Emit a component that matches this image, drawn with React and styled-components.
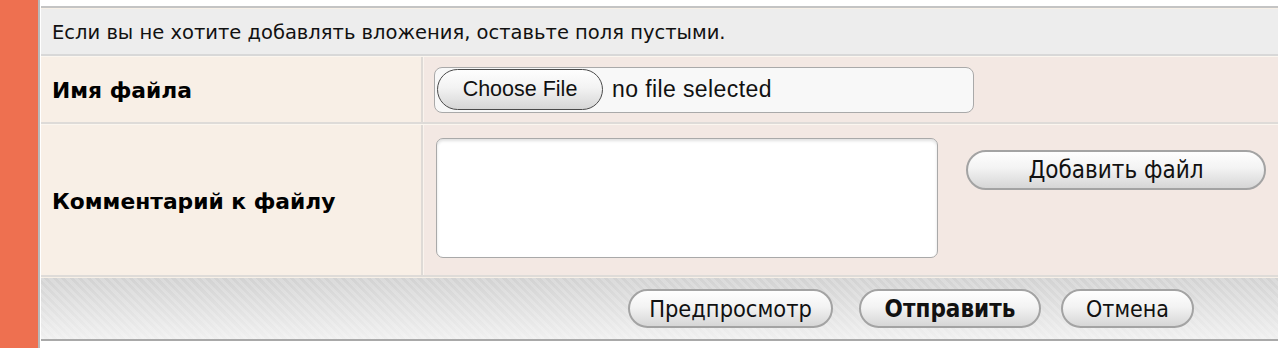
import React from "react";
import styled, { createGlobalStyle } from "styled-components";

const GlobalStyle = createGlobalStyle`
  html, body { margin: 0; padding: 0; background: #ffffff; }
  body { font-family: "DejaVu Sans", Verdana, sans-serif; color: #000; }
  #root { height: 348px; overflow: hidden; }
`;

const Page = styled.div`
  display: flex;
  height: 348px;
  width: 1278px;
  overflow: hidden;
`;

const Sidebar = styled.div`
  flex: 0 0 38px;
  background: #ee7050;
`;

const Main = styled.div`
  flex: 1;
  border-left: 2px solid #b9b9b9;
  padding: 6px 0 0 1px;
  background: #fff;
  min-width: 0;
`;

const Panel = styled.div`
  border-top: 2px solid #c4c4c4;
  border-bottom: 2px solid #a9a9a9;
  width: 1300px;
`;

const InfoRow = styled.div`
  border-top: 1px solid #f7f0e7;
  border-bottom: 2px solid #d8d8d8;
  height: 43px;
  background: #ededed;
  display: flex;
  align-items: center;
  padding: 2px 0 0 11px;
  font-size: 19.5px;
  color: #111;
`;

const FieldRow = styled.div`
  display: grid;
  grid-template-columns: 382px 1fr;
  border-top: 1px solid #fbf6ef;
  border-bottom: 2px solid #dedbd8;
  height: ${(p) => p.$height}px;
`;

const LabelCell = styled.div`
  background: #f8efe6;
  border-right: 2px solid #dedad6;
  display: flex;
  align-items: center;
  padding: 2px 0 0 11px;
  font-weight: bold;
  font-size: 21.8px;
`;

const InputCell = styled.div`
  background: #f3e8e3;
  border-left: 1px solid #faf4ee;
  display: flex;
  align-items: ${(p) => (p.$top ? "flex-start" : "center")};
  padding: ${(p) => p.$pad};
  gap: ${(p) => p.$gap || 0}px;
`;

const FileBox = styled.div`
  width: 536px;
  height: 44px;
  border: 1px solid #a9a9a9;
  border-radius: 8px;
  background: #f8f8f8;
  display: flex;
  align-items: center;
  padding-left: 2px;
  gap: 9px;
`;

const PillButton = styled.button`
  box-sizing: border-box;
  width: ${(p) => p.$w}px;
  height: ${(p) => p.$h || 40}px;
  margin-top: ${(p) => p.$mt || 0}px;
  border-radius: 22px;
  border: ${(p) => (p.$dark ? "1.5px solid #4a4a4a" : "2px solid #a3a3a3")};
  background: linear-gradient(#fefefe 0%, #f3f3f3 45%, #d6d6d6 100%);
  font-family: ${(p) =>
    p.$helv ? '"Liberation Sans", Arial, sans-serif' : '"DejaVu Sans Condensed", "DejaVu Sans", sans-serif'};
  font-stretch: ${(p) => (p.$helv ? "normal" : "condensed")};
  font-size: ${(p) => p.$fs || 20}px;
  font-weight: ${(p) => (p.$bold ? "bold" : "normal")};
  color: #111;
  padding: 0;
  flex: 0 0 auto;
  cursor: pointer;
`;

const FileStatus = styled.span`
  font-family: "Liberation Sans", Arial, sans-serif;
  font-size: 23px;
  letter-spacing: 0.4px;
  color: #111;
`;

const CommentArea = styled.textarea`
  box-sizing: border-box;
  width: 502px;
  height: 120px;
  border: 1.5px solid #a9a9a9;
  border-radius: 7px;
  background: #fff;
  box-shadow: inset 0 2px 3px rgba(0, 0, 0, 0.12);
  resize: none;
  outline: none;
  flex: 0 0 auto;
`;

const Footer = styled.div`
  border-top: 1px solid #f7f0e7;
  height: 61px;
  display: flex;
  align-items: center;
  padding-left: 587px;
  background:
    repeating-linear-gradient(45deg, rgba(255, 255, 255, 0.18) 0 3px, rgba(255, 255, 255, 0) 3px 6px),
    linear-gradient(#d2d2d2, #f0f0f0);
`;

const Gap = styled.span`
  display: inline-block;
  width: ${(p) => p.$w}px;
`;

export default function App() {
  return (
    <>
      <GlobalStyle />
      <Page>
        <Sidebar />
        <Main>
          <Panel>
            <InfoRow>Если вы не хотите добавлять вложения, оставьте поля пустыми.</InfoRow>
            <FieldRow $height={65}>
              <LabelCell>Имя файла</LabelCell>
              <InputCell $pad="0 0 0 10px">
                <FileBox>
                  <PillButton type="button" $w={166} $h={41} $dark $helv $fs={21.5}>
                    Choose File
                  </PillButton>
                  <FileStatus>no file selected</FileStatus>
                </FileBox>
              </InputCell>
            </FieldRow>
            <FieldRow $height={150}>
              <LabelCell>Комментарий к файлу</LabelCell>
              <InputCell $top $pad="13px 0 0 12px" $gap={28}>
                <CommentArea />
                <PillButton type="button" $w={300} $mt={12} $fs={24}>
                  Добавить файл
                </PillButton>
              </InputCell>
            </FieldRow>
            <Footer>
              <PillButton type="button" $w={205} $h={39} $fs={23.4}>
                Предпросмотр
              </PillButton>
              <Gap $w={26} />
              <PillButton type="button" $w={182} $h={39} $fs={24} $bold>
                Отправить
              </PillButton>
              <Gap $w={20} />
              <PillButton type="button" $w={133} $h={39} $fs={23}>
                Отмена
              </PillButton>
            </Footer>
          </Panel>
        </Main>
      </Page>
    </>
  );
}
